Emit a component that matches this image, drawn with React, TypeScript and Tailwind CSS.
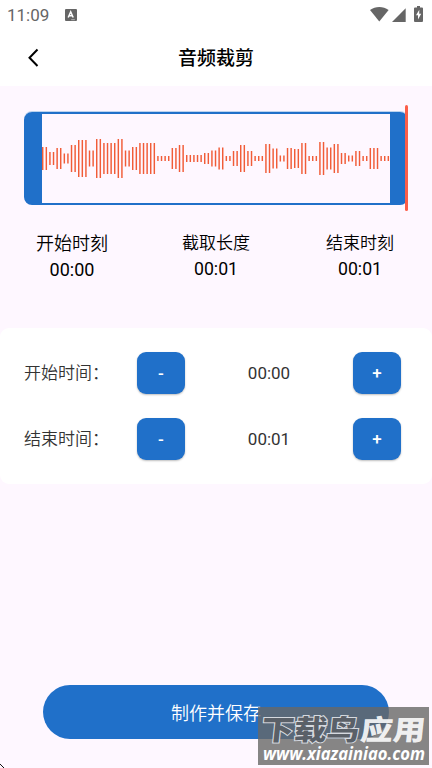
import { useState } from "react";

const BAR_STEP = 3.6;

// [bar height, how many bars in a row]
const WAVE_RUNS: [number, number][] = [
  [23, 2], [13, 2], [21, 2], [10, 2], [27, 2], [37, 3], [16, 2], [39, 2],
  [31, 4], [39, 2], [16, 2], [23, 2], [31, 5], [5, 4], [21, 2], [27, 2],
  [7, 5], [11, 2], [16, 2], [22, 2], [5, 2], [15, 2], [27, 2], [15, 2],
  [5, 3], [29, 2], [20, 2], [6, 2], [21, 2], [19, 2], [31, 2], [5, 3],
  [33, 2], [22, 2], [29, 2], [11, 2], [6, 2], [15, 2], [5, 2], [21, 3],
  [5, 3],
];

const bars = WAVE_RUNS.flatMap(([height, count]) =>
  Array.from({ length: count }, () => height)
);

const formatTime = (seconds: number) =>
  `${String(Math.floor(seconds / 60)).padStart(2, "0")}:${String(
    seconds % 60
  ).padStart(2, "0")}`;

const StatusBar = () => (
  <div className="flex h-[30px] items-center justify-between pl-[7px] pr-2 text-[#666]">
    <div className="flex items-center gap-4">
      <span className="text-[17px] leading-[30px]">11:09</span>
      <svg className="h-3 w-3" viewBox="0 0 12 12" aria-hidden="true">
        <rect width="12" height="12" rx="1" fill="#666" />
        <path
          d="M3.2 8.5 5.7 2.8 8.2 8.5M4.2 6.8h3"
          fill="none"
          stroke="#fff"
          strokeWidth="1.5"
        />
        <path d="M6.2 10.7h3.6" stroke="#ccc" strokeWidth="0.8" />
      </svg>
    </div>
    <svg
      className="mb-0.5 h-4 w-[54px]"
      viewBox="0 0 54 16"
      fill="currentColor"
      aria-hidden="true"
    >
      <path d="M0 3.9C5.4 0 13.2 0 18.6 3.9L9.3 15.6z" />
      <path d="M35.7 2.3v13.7H22z" />
      <path d="M47 1.5V0h3v1.5h2q1 0 1 1v12.5q0 1-1 1h-7q-1 0-1-1v-12.5q0-1 1-1z" />
      <path d="M49.3 3.7 46 9.2h2v4.2l3.2-5.7h-2z" fill="#fff" />
    </svg>
  </div>
);

const Header = () => (
  <header className="flex h-14 items-center px-6">
    <button className="w-10" aria-label="返回">
      <svg
        className="h-5 w-5"
        viewBox="0 0 20 20"
        fill="none"
        stroke="#000"
        strokeWidth="2"
      >
        <path d="M13.5 1.5 5.5 9.8l8 8.2" />
      </svg>
    </button>
    <h1 className="flex-1 pt-[3px] text-center text-[19px] font-medium text-black">
      音频裁剪
    </h1>
    <div className="w-10" />
  </header>
);

const Waveform = () => (
  <div className="relative mx-6 mt-[26px] h-[93px] w-[384px] rounded-[8px] border-x-[18px] border-y-2 border-[#2070c9] shadow-[0_-1px_0_#bcd3ee]">
    <svg className="block h-[89px] w-[348px]" viewBox="0 0 348 89">
      {bars.map((height, index) => (
        <rect
          key={index}
          x={index * BAR_STEP}
          y={44.5 - height / 2}
          width="1.45"
          height={height}
          fill="#f15c38"
        />
      ))}
    </svg>
    <div className="absolute -top-[9px] -right-[18px] h-[106px] w-[3px] rounded-full bg-[#fc5e48]" />
  </div>
);

type TTimeLabel = {
  label: string;
  value: string;
  active?: boolean;
};

const TimeLabel = ({ label, value, active }: TTimeLabel) => (
  <div
    className={
      active
        ? "flex-1 pt-px text-center text-[18px] leading-[26px]"
        : "flex-1 text-center text-[17px] leading-[26px]"
    }
  >
    <div className="font-[350]">{label}</div>
    <div className={active ? "text-[18px]" : "text-[17.7px]"}>{value}</div>
  </div>
);

type TStepper = {
  label: string;
  value: number;
  onChange: (value: number) => void;
};

const Stepper = ({ label, value, onChange }: TStepper) => {
  const buttonClass =
    "h-[42px] w-12 rounded-[9px] bg-[#2070c9] pt-0.5 text-[17px] font-medium text-white shadow-[0_1px_2px_rgba(0,0,0,0.25)]";

  return (
    <div className="flex h-[42px] items-center text-[17px] text-[#333]">
      <span className="flex w-[113px] pt-0.5 font-[350]">
        <span>{label}</span>
        <span>：</span>
      </span>
      <button
        className={buttonClass}
        onClick={() => onChange(Math.max(0, value - 1))}
      >
        -
      </button>
      <span className="w-[168px] pt-0.5 text-center">{formatTime(value)}</span>
      <button className={buttonClass} onClick={() => onChange(value + 1)}>
        +
      </button>
    </div>
  );
};

const Watermark = () => (
  <div className="pointer-events-none absolute top-[707px] left-[258px] h-[58px] w-[171px] bg-[#686867]/80">
    <svg
      className="block h-[58px] w-[171px] overflow-visible"
      viewBox="0 0 171 58"
    >
      <g
        transform="skewX(-6)"
        fontFamily="'Noto Sans CJK SC', sans-serif"
        fontWeight="900"
        fontSize="28"
      >
        <text
          x="6"
          y="33"
          textLength="98"
          lengthAdjust="spacingAndGlyphs"
          fill="#5a6068"
          stroke="#d5d9df"
          strokeWidth="2"
          paintOrder="stroke"
        >
          下载鸟
        </text>
        <text
          x="105"
          y="33"
          textLength="65"
          lengthAdjust="spacingAndGlyphs"
          fill="#fff"
          fillOpacity="0.9"
        >
          应用
        </text>
      </g>
      <text
        x="5"
        y="52.5"
        textLength="162"
        lengthAdjust="spacingAndGlyphs"
        fontFamily="'Open Sans', sans-serif"
        fontWeight="700"
        fontStyle="italic"
        fontSize="17"
        fill="#fff"
      >
        www.xiazainiao.com
      </text>
    </svg>
  </div>
);

const App = () => {
  const [start, setStart] = useState(0);
  const [end, setEnd] = useState(1);

  return (
    <div
      lang="zh-CN"
      className="relative flex h-[768px] w-[432px] flex-col overflow-hidden bg-[#fef7ff] font-[Roboto,'Noto_Sans_CJK_SC',sans-serif] text-black"
    >
      <div className="bg-white">
        <StatusBar />
        <Header />
      </div>

      <Waveform />

      <div className="mt-[25px] flex h-[98px]">
        <TimeLabel label="开始时刻" value={formatTime(start)} active />
        <TimeLabel label="截取长度" value={formatTime(end - start)} />
        <TimeLabel label="结束时刻" value={formatTime(end)} />
      </div>

      <div className="flex h-[156px] flex-col gap-6 rounded-[9px] bg-white px-6 pt-6">
        <Stepper label="开始时间" value={start} onChange={setStart} />
        <Stepper label="结束时间" value={end} onChange={setEnd} />
      </div>

      <button className="mx-auto mt-auto mb-[29px] h-[54px] w-[346px] rounded-full bg-[#2070c9] pt-0.5 text-[18px] font-[350] text-white">
        制作并保存
      </button>

      <Watermark />
      <svg
        className="absolute bottom-0 left-0 h-1 w-1"
        viewBox="0 0 4 4"
        aria-hidden="true"
      >
        <path d="M0 0h1v1h1v1h1v1h1v1H3V3H2V2H1V1H0z" fill="#111" />
      </svg>
    </div>
  );
};

export default App;
